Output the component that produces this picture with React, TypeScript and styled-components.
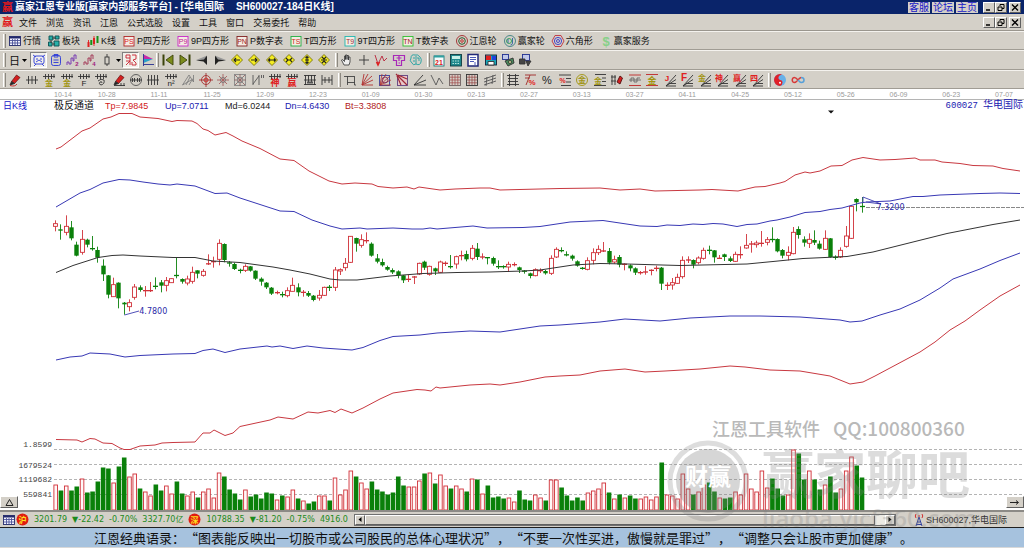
import React from 'react';
import styled, { createGlobalStyle, css } from 'styled-components';

const SANS = `"Liberation Sans", "Noto Sans CJK SC", sans-serif`;
const CJK = `"Noto Sans CJK SC", sans-serif`;
const MONO = `"Liberation Mono", "Noto Sans CJK SC", monospace`;
const FACE = '#d4d0c8';

const Global = createGlobalStyle`
  * { box-sizing: border-box; }
  body { margin: 0; background: #fff; }
  button { font: inherit; padding: 0; margin: 0; border: 0; background: none; color: inherit; }
  svg { display: block; }
`;

/* ---------- frame ---------- */

const Window = styled.main`
  position: relative;
  display: flex;
  flex-direction: column;
  min-height: 100vh;
  overflow: hidden;
  background: ${FACE};
  color: #111;
  font-family: ${SANS};
  font-size: 9px;
  white-space: nowrap;
`;

const TitleBar = styled.header`
  display: flex;
  align-items: center;
  height: 14px;
  padding: 0 3px 0 2px;
  background: #0a246a;
`;

const Title = styled.h1`
  display: flex;
  flex: 1;
  gap: 12px;
  margin: 0 0 0 2px;
  color: #fff;
  font-size: 10px;
  font-weight: 700;
  line-height: 14px;
`;

const HeaderLinks = styled.nav`
  display: flex;
  gap: 2px;
  margin-right: 5px;
`;

const HeaderLink = styled.a`
  width: 22px;
  height: 11px;
  background: ${FACE};
  color: #1414c8;
  font-size: 10px;
  line-height: 11px;
  text-align: center;
  text-decoration: none;
`;

const raised = css`
  background: ${FACE};
  border: 1px solid;
  border-color: #fff #606060 #606060 #fff;
`;

const WindowControls = styled.div`
  display: flex;
  & > :last-child { margin-left: 2px; }
`;

const ControlButton = styled.button`
  ${raised}
  display: grid;
  place-items: center;
  width: 12px;
  height: 11px;
`;

const MenuBar = styled.nav`
  display: flex;
  align-items: center;
  height: 17px;
  padding: 0 3px 0 2px;
  border-bottom: 1px solid #9a968e;
`;

const MenuList = styled.div`
  display: flex;
  flex: 1;
  gap: 9px;
  margin-left: 6px;
`;

const Brand = styled.span<{ $size: number }>`
  width: ${p => p.$size}px;
  color: #e01818;
  font-size: ${p => p.$size}px;
  font-weight: 700;
  line-height: 13px;
`;

const ToolBar = styled.div<{ $tall?: boolean }>`
  display: flex;
  align-items: center;
  height: ${p => (p.$tall ? 20 : 19)}px;
  padding-left: 3px;
  border-top: 1px solid #f4f2ee;
  border-bottom: 1px solid #a09c94;
`;

const Grip = styled.span`
  width: 3px;
  height: 14px;
  border-left: 1px solid #fff;
  border-right: 1px solid #8c8880;
`;

const NavList = styled.div`
  display: flex;
  gap: 6px;
  margin-left: 2px;
`;

const NavButton = styled.button`
  display: flex;
  align-items: center;
  gap: 1px;
  line-height: 14px;
`;

const IconGroup = styled.div<{ $width: number }>`
  display: grid;
  grid-auto-flow: column;
  grid-auto-columns: 1fr;
  width: ${p => p.$width}px;
  margin-right: 2px;
`;

const IconButton = styled.button<{ $pressed?: boolean; $wide?: boolean }>`
  display: flex;
  align-items: center;
  justify-content: center;
  gap: 2px;
  flex: none;
  width: ${p => (p.$wide ? '24px' : '17px')};
  height: 16px;
  font-size: 11px;
  ${p => p.$pressed && css`
    background: #f2f0ea;
    border: 1px solid;
    border-color: #808080 #fff #fff #808080;
  `}
`;

const Row = styled.div`
  display: flex;
`;

/* ---------- chart ---------- */

const DateAxis = styled.div`
  display: grid;
  grid-template-columns: 44fr repeat(17, 53fr) 29fr;
  height: 11px;
  padding-left: 54px;
  background: #fff;
  border-bottom: 1px solid #b4b4b4;
  color: #9a9a9a;
  font-size: 7px;
  line-height: 11px;
  & > span { min-width: 0; }
`;

const Plot = styled.section`
  position: relative;
  flex: 1;
  min-height: 400px;
  background: #fff;
`;

const PlotSvg = styled.svg`
  position: absolute;
  inset: 0;
  width: 100%;
  height: 100%;
`;

const Legend = styled.div`
  position: relative;
  display: grid;
  grid-template-columns: 51px 51px repeat(4, 60px) 1fr;
  padding: 0 1px 0 3px;
  line-height: 12px;
`;

const LegendText = styled.span<{ $tone: string }>`
  color: ${p => p.$tone};
`;

const ChannelName = styled.span`
  font-size: 10px;
`;

const Security = styled.span`
  flex: 1;
  color: #2020b0;
  font-family: ${MONO};
  text-align: right;
  & > b {
    margin-left: 5px;
    font-size: 10px;
    font-weight: 400;
  }
`;

const AxisLabel = styled.span<{ $top: number }>`
  position: absolute;
  top: ${p => p.$top}%;
  left: 0;
  width: 52px;
  color: #444;
  font-family: ${MONO};
  font-size: 8px;
  line-height: 10px;
  text-align: right;
`;

const PriceTag = styled.span<{ $left: number; $top: number }>`
  position: absolute;
  left: ${p => p.$left}%;
  top: ${p => p.$top}%;
  color: #2a2aa8;
  font-family: "DejaVu Sans", sans-serif;
  font-size: 8px;
  line-height: 10px;
`;

const CornerButton = styled.button<{ $side: 'left' | 'right' }>`
  ${raised}
  position: absolute;
  bottom: 2px;
  ${p => p.$side}: 0;
  display: grid;
  place-items: center;
  width: 18px;
  height: 12px;
`;

const Watermark = styled.svg`
  position: absolute;
  right: 24px;
  bottom: 8px;
  pointer-events: none;
  font-family: ${CJK};
`;

/* ---------- bottom ---------- */

const StatusBar = styled.footer`
  display: flex;
  align-items: center;
  height: 18px;
  padding: 0 4px 0 2px;
  border-top: 2px solid #8c8a86;
  border-bottom: 1px solid #202020;
`;

const Ticker = styled.div`
  display: flex;
  align-items: center;
  gap: 5px;
  min-width: 350px;
  color: #1c8a1c;
  font-family: "DejaVu Sans", "Noto Sans CJK SC", sans-serif;
  font-size: 8px;
  line-height: 12px;
`;

const Scroller = styled.div`
  display: flex;
  flex: 1;
  height: 12px;
  margin: 0 18px 0 2px;
  background: #eceae4;
  border: 1px solid #707070;
`;

const ScrollThumb = styled.div`
  ${raised}
  flex: 1;
  margin-right: 10px;
`;

const ScrollButton = styled.button`
  ${raised}
  display: grid;
  place-items: center;
  width: 10px;
`;

const Station = styled.div`
  display: flex;
  align-items: center;
  gap: 2px;
  width: 106px;
  color: #333;
  line-height: 12px;
`;

const Quote = styled.p`
  height: 20px;
  margin: 0;
  padding-left: 94px;
  background: #a6c2de;
  border-bottom: 1px solid #d8d8d8;
  color: #101010;
  font-family: ${CJK};
  font-size: 13px;
  line-height: 20px;
  text-spacing-trim: space-all;
`;

/* ---------- icons ---------- */

type Kid = { children?: React.ReactNode };

const Ico = ({ children }: Kid) => (
  <svg width="14" height="14" viewBox="0 0 14 14" fill="none" stroke="#333" strokeWidth=".9" aria-hidden="true">
    {children}
  </svg>
);

const Glyph = ({ x = 7, y, size, fill = '#222', weight = 700, children }: Kid & { x?: number; y: number; size: number; fill?: string; weight?: number }) => (
  <text x={x} y={y} fontSize={size} fill={fill} stroke="none" textAnchor="middle" fontWeight={weight} fontFamily={SANS}>
    {children}
  </text>
);

const Ladder = ({ children }: Kid) => (
  <Ico>
    <path d="M1 3.5H13M3.5 1V6M6.5 1V6M9.5 1V6M12 1V5" />
    {children}
  </Ico>
);

const Boxed = ({ tone, ink, label }: { tone: string; ink: string; label: string }) => (
  <Ico>
    <rect x="2" y="2.5" width="10" height="9.5" stroke={tone} fill="#f4ece4" />
    <Glyph y={9.7} size={7} weight={400} fill={ink}>{label}</Glyph>
  </Ico>
);

const Rings = ({ a, b, c }: { a: string; b: string; c: string }) => (
  <Ico>
    <circle cx="7" cy="7" r="5.5" stroke={a} />
    <circle cx="7" cy="7" r="3.3" stroke={b} />
    <circle cx="7" cy="7" r="1.3" stroke={c} />
  </Ico>
);

const Diamond = ({ d }: { d: string }) => (
  <Ico>
    <path d="M7 1.5L12.5 7L7 12.5L1.5 7Z" fill="#f4ec20" stroke="#77700c" />
    <path d={d} stroke="#222" strokeWidth="1.1" />
  </Ico>
);

const FanLines = ({ label, tone, size = 8 }: { label: string; tone: string; size?: number }) => (
  <Ico>
    <path d="M3 13L13 2M3 13L13 6.5M3 13H13M6 10.5H13" />
    <Glyph x={4} y={8} size={size} fill={tone}>{label}</Glyph>
  </Ico>
);

const Pen = () => (
  <>
    <path d="M3.5 8.5L8.5 2L12 4.5L6.5 10.5Z" fill="#d42020" stroke="#5a1010" strokeWidth=".7" />
    <path d="M3.5 8.5L2 12L6.5 10.5Z" fill="#222" />
  </>
);

const TableIcon = () => (
  <Ico>
    <rect x="1.5" y="2.5" width="11" height="9" fill="#f4f4ff" stroke="#22286a" />
    <path d="M1.5 3.5H12.5" strokeWidth="2" stroke="#22286a" />
    <path d="M2 6.5H12M2 9H12M4.5 5V11M7 5V11M9.5 5V11" stroke="#4c5298" strokeWidth=".9" />
  </Ico>
);

const GridIcon = ({ tone, accent }: { tone: string; accent: string }) => (
  <Ico>
    <rect x="1.5" y="1.5" width="11" height="11" stroke={tone} />
    <path d="M4.2 2V12M7 2V12M9.8 2V12M2 4.2H12M2 7H12M2 9.8H12" stroke={accent} strokeWidth=".7" />
  </Ico>
);

const Caret = () => (
  <svg width="5" height="3" viewBox="0 0 5 3" aria-hidden="true"><path d="M0 0H5L2.5 3Z" /></svg>
);

const OLIVE = '#a09410';
const RED = '#e02020';

const navItems: [string, React.ReactNode][] = [
  ['行情', <TableIcon />],
  ['板块', <Ico><path d="M2 2H6V6H2ZM8 2H12V5H8ZM1.500 8H5V12H1.500ZM7 7H12V12H7Z" fill="#28b0a8" stroke="#0c4e50" /><path d="M5 4H9M4 6V9M5 10H8" /></Ico>],
  ['K线', <Ico><path d="M2.500 8V13M8 4V10" stroke={RED} strokeWidth="2" /><path d="M5.300 6V11M11.500 2V9" stroke="#189018" strokeWidth="2" /><path d="M2.500 6V13M8 2V12" stroke={RED} /></Ico>],
  ['P四方形', <Boxed tone="#b02828" ink={RED} label="PS" />],
  ['9P四方形', <Boxed tone="#c828c8" ink="#c01890" label="P9" />],
  ['P数字表', <Boxed tone="#802020" ink="#a01818" label="PN" />],
  ['T四方形', <Boxed tone="#20b040" ink="#c83020" label="TS" />],
  ['9T四方形', <Boxed tone="#20b8b0" ink="#a03038" label="T9" />],
  ['T数字表', <Boxed tone="#30c030" ink="#a02020" label="TN" />],
  ['江恩轮', <Rings a="#a02828" b="#184818" c="#c02020" />],
  ['赢家轮', <Ico><circle cx="7" cy="7" r="5.500" stroke="#3c8080" /><circle cx="6" cy="7" r="2.500" stroke="#28a050" /><path d="M9.500 4V9Q9.500 11 7.500 11M5 5V9" stroke="#3060a0" /></Ico>],
  ['六角形', <Ico><path d="M4 1.500H10L13 7L10 12.500H4L1 7Z" stroke="#c03040" /><circle cx="7" cy="7" r="3.600" stroke="#3838c8" /><circle cx="7" cy="7" r="1.500" stroke="#3838c8" /></Ico>],
  ['赢家服务', <Ico><Glyph y={12} size={13} fill="#88d088">$</Glyph></Ico>],
];

const faceIcon = <Ico><rect x="2" y="3" width="10" height="8" rx="2" stroke="#2838d8" /><path d="M1 2L4 4M13 2L10 4M4 6H6M8 6H10M4 9L7 7L10 9M2 13L4 11M12 13L10 11" stroke="#2838d8" /></Ico>;
const clipIcon = <Ico><rect x="2.500" y="2.500" width="9" height="10" rx="2" stroke="#2838d8" /><path d="M5 1.500H9V4H5ZM4.500 7H9.500M4.500 9.500H9.500" stroke="#2838d8" /></Ico>;
const waveIcon = (tone: string, n: string) => <Ico><path d="M1 12V9H3V11H5V5H7V8H8V2H10V6" stroke={tone} /><Glyph x={11} y={13} size={6} fill="#a02080">{n}</Glyph></Ico>;
const candleIcon = <Ico><rect x="5" y="4" width="4" height="7" /><path d="M7 1V4M7 11V13" /></Ico>;
const redFaceIcon = <Ico><path d="M2 2H6V5H2ZM8 2H12V6L9 7L12 10V12H8V9M2 8H6L4 10L2 12M6 5V12" stroke="#c82030" /></Ico>;
const flagIcon = <Ico><path d="M2.500 1.500L12 6H2.500Z" fill="#c828a8" stroke="none" /><path d="M2.500 6H12L2.500 10Z" fill="#28a0c8" stroke="none" /><path d="M2.500 1V13M2.500 11.500H13" stroke="#283090" /></Ico>;

const navigationIcons = [
  <Ico><path d="M12 2V12L5 7Z" fill="#7c8c1c" stroke="#3c440c" /><path d="M2.500 1.500V12.500" strokeWidth="2" stroke="#3c440c" /></Ico>,
  <Ico><path d="M2 2V12L9 7Z" fill="#7c8c1c" stroke="#3c440c" /><path d="M11.500 1.500V12.500" strokeWidth="2" stroke="#3c440c" /></Ico>,
  <Ico><path d="M1 7L11 3V8Z" fill="#999" stroke="none" /><path d="M12 2.500V12L8.500 8.500L1 7.500L9 6.500Z" fill="#222" stroke="none" /></Ico>,
  <Ico><path d="M13 7L3 3V8Z" fill="#999" stroke="none" /><path d="M2 2.500V12L5.500 8.500L13 7.500L5 6.500Z" fill="#222" stroke="none" /></Ico>,
  <Diamond d="M4 7H10M6 5L4 7L6 9" />,
  <Diamond d="M4 7H10M8 5L10 7L8 9" />,
  <Diamond d="M3.500 7H10.500M5 5.500L3.500 7L5 8.500M9 5.500L10.500 7L9 8.500" />,
  <Diamond d="M4 5L6 7L4 9M10 5L8 7L10 9M6 7H8" />,
  <Diamond d="M7 3.500V10.500M5.500 5L7 3.500L8.500 5M5.500 9L7 10.500L8.500 9M5 7H9" />,
  <Diamond d="M5 4L7 6L9 4M5 10L7 8L9 10M4 7H10" />,
];

const pointerIcons = [
  <Ico><path d="M4 12L1.500 7L2.500 6.500L4.500 8.500V3H5.500V6.500V2H7V6.500V2.500H8.500V7V4H10V9L9 12Z" fill="#eee" strokeWidth=".8" /></Ico>,
  <Ico><path d="M7 2V12M2 7H12" /></Ico>,
  <Ico><path d="M1 2L4 11L8 3L10 8L13 5" stroke="#b82038" /><path d="M2.500 9L4 12L5.500 9" stroke={RED} strokeWidth="1.500" /></Ico>,
  <Ico><path d="M1.500 2.500H12.500V7.500H9.500V12.500H4.500V7.500H1.500ZM4.500 5H9.500M7 3V8M6.500 10H8" stroke="#a828b8" strokeWidth="1.200" /></Ico>,
  <Ico><path d="M6 2Q2 1 2 5Q0 8 3 10Q4 13 7 11Q11 13 12 9Q13 6 11 4Q9 1 6 2ZM7 3V11M4 5H6M4 8H6M8 5H10V8" stroke="#20a0a0" /></Ico>,
];

const utilityIcons = [
  <Ico><rect x="2" y="3" width="10" height="10" fill="#f4fcfc" stroke="#207878" /><path d="M2 3.500H12" stroke="#30a0a0" strokeWidth="2" /><Glyph y={11.500} size={7} fill={RED}>21</Glyph></Ico>,
  <Ico><rect x="1.500" y="1.500" width="11" height="11.500" fill="#20888c" stroke="#103c40" /><rect x="3" y="3" width="8" height="3" fill="#c8f0e8" stroke="none" /><path d="M3.500 8H10.500M3.500 10.500H10.500" stroke="#c8f0e8" strokeDasharray="1.500 1" /></Ico>,
  <Ico><rect x="2" y="1.500" width="10" height="11.500" fill="#fff" stroke="#202878" strokeWidth="1.500" /><path d="M4 4.500H10M4 6.500H10M4 8.500H8M9 9V12" stroke="#3848b0" /></Ico>,
  <Ico><rect x="1.500" y="2" width="11" height="10" fill="#18a8b8" stroke="#102038" /><path d="M2 2.500H7V7H2Z" fill="#e02020" stroke="none" /><path d="M8 3H12V7H8Z" fill="#2040e0" stroke="none" /><path d="M4 8.500H10V12H4Z" fill="#fff" /></Ico>,
  <Ico><rect x="1.500" y="1.500" width="6" height="5" fill="#c0c8e8" stroke="#203090" /><path d="M4 8L12 5L13 10L7 13Z" fill="#48885c" /><circle cx="9" cy="9" r="1.500" fill="#d8e8a0" /></Ico>,
  <Ico><rect x="4.500" y="1.500" width="7" height="6" fill="#c0c8e8" stroke="#203090" /><path d="M1.500 6H7V11H1.500ZM8 8H13L10 13Z" fill="#444" /></Ico>,
];

const drawIcons = [
  <Ico><Pen /><path d="M2 12.500Q7 14 9 11" stroke="#c02020" /></Ico>,
  <Ico><path d="M1 7H13M3.500 3V11M7 3V11M10.500 3V11" /></Ico>,
  <Ladder><Glyph y={13} size={8} fill={OLIVE}>金</Glyph></Ladder>,
  <Ladder><Glyph y={13} size={8} fill={OLIVE}>金</Glyph></Ladder>,
  <Ladder><Glyph y={13} size={8} weight={400}>F</Glyph></Ladder>,
  <Ladder><path d="M4 8Q7 5 10 7Q11 11 7 12Q4 11 6 9Q8 8 8 10" /></Ladder>,
  <Ico><Pen /><path d="M2 12.500H13M9 10V13M12 10V13" /></Ico>,
  <Ico><circle cx="7" cy="7" r="5.500" stroke="#555" /><path d="M1 7H13M3.500 5V9M5.500 5V9M8.500 5V9M10.500 5V9" /></Ico>,
  <Ico><path d="M1 7H13M2.500 2V12M5.500 2V12M8.500 2V12M11.500 2V12" /></Ico>,
  <Ladder><Glyph y={13} size={8} weight={400}>n²</Glyph></Ladder>,
  <Ico><path d="M1.500 12L8 2L12.500 9V2M1.500 12L12 6M5 12L9 4M8 12L11 7" stroke="#777" strokeWidth=".8" /></Ico>,
  <Ico><circle cx="7" cy="7" r="4.500" stroke="#a83030" /><circle cx="7" cy="7" r="2" stroke={RED} /><path d="M7 0V14M0 7H14" stroke="#a03030" /></Ico>,
  <Ico><path d="M7 1V13M1 7H13M3 3L11 11M11 3L3 11" stroke="#a86060" /><circle cx="7" cy="7" r="2.500" stroke="#777" /></Ico>,
  <Ico><rect x="1.500" y="1.500" width="11" height="11" stroke="#888" /><path d="M7 1V13M1 7H13M2 2L12 12M12 2L2 12" stroke="#906868" /><rect x="4.500" y="4.500" width="5" height="5" stroke="#888" /></Ico>,
  <Ico><path d="M2 2V12M2 11L8 3M8 2V12M10.500 2V5M12.500 2V5" stroke="#555" /></Ico>,
  <Ladder><Glyph y={13} size={9} fill={RED}>神</Glyph></Ladder>,
  <Ladder><Glyph y={13} size={9} fill={RED}>赢</Glyph></Ladder>,
  <Ico><path d="M1 2.500H13M1 7H13M1 11.500H13M2.500 2V12M5.500 2V9M8.500 2V9M11.500 2V12" /><path d="M4 9.500H10" strokeWidth="2" stroke="#555" /></Ico>,
  <Ico><path d="M2 2V12M5 4V10M9 4V10M12 2V12M2 7H12" /></Ico>,
];

const fan = 'M2 12L4 1M2 12L8 1M2 12L12 3M2 12L13 7M2 12H13';
const shapeIcons = [
  <Ico><rect x="4.500" y="3.500" width="7" height="6" stroke="#444" /><path d="M1 3.500H4M4.500 9V12M11.500 9V12H13" stroke="#444" /></Ico>,
  <Ico><path d={fan} stroke="#b03030" /></Ico>,
  <Ico><rect x="1.500" y="2.500" width="10" height="10" stroke="#3840a0" /><path d={fan} stroke="#b03030" strokeWidth=".8" /><circle cx="7" cy="7" r="3" stroke="#803060" /></Ico>,
  <Ico><rect x="2.500" y="2.500" width="10" height="10" fill="#e8c8c8" stroke="#604080" /><path d="M1 1L9 9M3 2L12 6M2 3L6 12M2 2L12 12" stroke="#a02838" strokeWidth="1.200" /></Ico>,
  <Ico><path d="M1 12L10 2M1 12L13 7M1 12H13" /></Ico>,
  <Ico><path d="M1 2L6 12L9 5L13 11" stroke="#555" /></Ico>,
  <GridIcon tone="#706060" accent="#a04848" />,
  <GridIcon tone="#333" accent="#904040" />,
  <Ico><path d="M1 6L13 2M1 9L13 5M1 12L13 8M3 13L4 4M9 11L10 2" stroke="#555" strokeWidth=".9" /></Ico>,
];

const measureIcons = [
  <Ico><path d="M3.500 1V13M9.500 1V13M1 2.500H13M2 5.500H12M2 8.500H12M1 11.500H13" /></Ico>,
  <Ico><path d="M2 2H13M2 5H7M3 12L7 2" stroke="#a02828" /><Glyph x={9} y={12} size={8} fill={RED}>%</Glyph></Ico>,
  <Ico><Glyph y={11} size={11} weight={400}>%</Glyph></Ico>,
  <Ico><path d="M1 2H13M8 5.500H13M8 9H13M3 12.500H13" /><Glyph x={4.500} y={9.500} size={7} fill={RED}>%</Glyph></Ico>,
  <Ico><circle cx="7" cy="7" r="5.500" stroke={OLIVE} /><Glyph y={10} size={8} fill={OLIVE}>金</Glyph></Ico>,
  <Ico><path d="M2 1.500H13M9 5H13M9 8.500H13M1 12.500H13" /><Glyph x={5} y={10.500} size={8} fill={OLIVE}>金</Glyph></Ico>,
  <Ico><path d="M2 2V12M5 2V12M1 4H6M1 8H6" /><path d="M7 9L10 3L12.500 5L10 11Z" fill="#d42020" stroke="#501010" /></Ico>,
  <Ico><path d="M1 2H13M1 12.500H13" stroke="#c02828" /><path d="M1 7H13M3 9V5H6V9H9V5H12" stroke="#666" /></Ico>,
  <Ico><path d="M1 1.500H13M1 12.500H13" stroke="#c02828" /><Glyph y={11} size={9} fill={OLIVE}>金</Glyph></Ico>,
  <FanLines label="J" tone={RED} />,
  <FanLines label="F" tone={RED} size={10} />,
  <FanLines label="金" tone={OLIVE} />,
  <FanLines label="神" tone={RED} />,
  <FanLines label="赢" tone={RED} />,
  <FanLines label="四" tone={RED} />,
];

const extraIcons = [
  <Ico><circle cx="7" cy="7" r="6" fill="#68b0e8" stroke="none" /><path d="M7 1A6 6 0 0 0 7 13Q9.500 12 9.500 9.500T7 7Q5 6 5.500 4T9 1.500Z" fill="#e02028" stroke="none" /><circle cx="7" cy="9.800" r="1" fill="#fff" stroke="none" /></Ico>,
  <Ico><path d="M7 7Q4 3.500 2 5Q.500 7 2 9Q4 10.500 7 7Q8.500 5 10 4.500" stroke="#d83838" strokeWidth="1.500" /><path d="M10 4.500Q13 4.500 13 7Q13 9.500 10.500 9.500Q9 9.500 7 7" stroke="#58a0d8" strokeWidth="1.500" /></Ico>,
];

/* ---------- data ---------- */

const dates = ['10-14', '10-28', '11-11', '11-25', '12-09', '12-23', '01-09', '01-30', '02-13', '02-27', '03-13', '03-27', '04-11', '04-25', '05-12', '05-26', '06-09', '06-23', '07-07'];

// One entry per session: r = close up, g = close down, followed by the volume.
const sessions = `r25 g19 r24 g19 g23 r31 g17 g18 g28 g42 g41 r27 g43 g52 r33 r36 g21 r18 r14 g25 g19 r24 r16 g28 g16 r14 r18 g12 r18 r21
r12 r37 g33 g20 g16 g10 r20 g13 g15 g11 g17 g16 r10 g14 r13 r20 g11 r9 g6 g8 r14 r14 g9 r32 r15 r20 r39 g33 r27 r21
g28 g20 g18 g15 g17 g33 g24 r23 r23 r29 g36 r37 g26 r35 r24 g21 r24 r21 g18 r31 g30 r16 g24 g12 g13 g11 r12 r8 g19 g10
g9 r15 r12 g9 r30 r30 g22 g14 g9 g12 g9 r17 r19 r21 r27 g17 r11 g15 r12 g14 g11 r11 r13 r10 r13 g47 r15 r14 r11 r36
r21 g15 r18 r25 g27 g18 r12 g11 g12 r18 r15 r36 r21 r18 r39 r22 g31 g21 g14 r15 r60 g56 g30 r39 g30 g20 r25 g33 g17 r21
r39 r53 g44 g32`.split(/\s+/);

// High, body top, body bottom, low; three steps to a chart unit, counted down from level 200.
const prices = `61,71,79,94 73,88,92,119 46,79,97,106 63,82,115,121 125,134,167,169 90,118,157,164 116,119,134,142 108,145,147,152 140,150,173,188 178,197,223,243
225,226,284,295 233,254,290,290 247,248,295,325 306,308,313,344 298,308,320,334 252,261,292,299 256,262,270,275 258,271,273,290 246,271,273,276 232,258,260,268
240,247,257,277 231,242,256,274 235,236,248,248 171,225,228,235 235,237,245,251 227,237,249,256 200,217,244,251 211,211,221,235 207,214,226,230 163,190,193,195
170,184,186,203 118,130,178,196 130,132,180,187 183,188,190,200 188,192,207,210 206,210,212,220 193,199,211,216 198,199,212,215 211,212,236,240 232,236,245,257
246,248,262,267 261,263,281,285 272,277,279,283 275,283,285,292 262,272,287,292 233,256,274,274 250,262,277,289 270,276,278,290 273,279,287,291 285,287,300,304
270,286,294,302 260,262,286,288 255,261,263,273 201,210,262,273 205,209,213,225 174,190,203,212 108,109,187,189 113,114,131,155 103,119,136,143 97,121,123,130
127,131,167,170 162,175,185,190 176,186,196,200 197,201,209,212 205,210,217,222 211,214,226,235 225,226,241,249 225,237,239,246 228,230,232,252 188,190,222,225
182,185,203,210 197,199,223,227 203,205,214,225 182,186,217,219 184,189,191,198 165,199,201,206 167,170,192,206 152,166,168,181 152,162,178,184 135,145,175,181
129,146,171,180 160,170,172,178 172,172,174,193 170,174,191,197 181,199,201,207 196,199,201,206 185,193,201,216 187,193,195,199 200,202,210,219 210,212,215,221
218,220,228,235 205,209,227,229 205,211,213,219 210,213,220,224 166,175,220,225 142,148,171,174 142,151,153,157 154,163,166,169 164,167,176,182 181,184,197,200
201,204,206,209 172,182,208,211 145,158,181,193 136,148,158,165 126,152,154,156 144,153,188,193 167,179,186,191 165,171,194,202 190,192,194,211 193,196,205,214
202,205,218,225 213,217,219,224 198,215,217,224 208,210,212,226 197,204,206,214 201,203,251,270 247,255,257,270 234,248,255,269 221,232,250,252 169,181,230,236
169,179,181,189 178,180,194,205 169,174,188,193 143,151,175,179 137,150,152,163 150,151,172,188 165,174,176,177 161,163,171,183 169,175,183,186 155,163,184,186
139,163,165,176 102,136,144,146 123,131,133,158 122,129,134,143 93,129,131,140 111,119,127,136 82,117,120,127 115,117,154,157 147,150,167,175 139,157,166,181
81,97,161,163 79,87,105,116 109,118,128,140 100,118,130,144 91,120,128,135 122,131,146,149 91,115,148,150 114,115,171,173 166,171,173,179 142,151,171,174
78,108,139,143 16,19,115,117 -5,-3,7,34 -9,18,21,38`.split(/\s+/).map(s => s.split(',').map(v => 200 + Number(v) / 3));

const UP = '#d03038';
const DOWN = '#0a800a';

const channel: [string, string][] = [
  ['#c83840', '56,149 61,147 82,131 90,128 103,119 111,117 119,113.500 132,113.500 140,117 158,118.500 172,121.500 177,120.500 192,121 197,123.500 203,129 208,130.500 215,135 226,132.500 233,136 242,141 260,148.500 280,159 294,160.500 309,171 329,181 342,184 355,183 372,184 378,186.500 393,188 407,187 414,189 419,187 440,190 455,189 480,188 490,188 500,190 560,188.500 600,188 620,190 640,189 655,191 700,190 712,189.500 738,191 755,187 765,186.500 780,183 785,181.500 795,175 805,172 810,173 820,171 831,166 842,165.500 852,160 863,157.500 880,160 895,159.500 915,158 920,160 935,160 942,162 960,163.500 973,165.500 993,166 1003,168.500 1020,171'],
  ['#3838b4', '56,207 80,193 90,189.500 103,183 119,179.500 130,180 143,182 158,184 170,185 177,184 195,186 215,193.500 227,193 240,198 280,211 294,211.500 312,220 330,226 342,229 360,228 367,229 393,228 412,229 423,229 430,228 437,229 473,226 487,228 523,227.500 540,226.500 570,222 603,220.500 613,222 640,226 657,226.500 667,225 680,225.500 693,224 703,224.500 713,223.500 723,224 737,226.500 747,224.500 757,224 770,221 777,220 790,217 805,212.500 820,211.500 830,209.500 842,208 860,203 867,202 890,201 913,196.500 923,196.500 940,195 980,193.500 1000,193 1020,193.500'],
  ['#333', '56,272.500 73,265.500 98,257.500 112,255.500 123,255 140,256 173,257.500 195,257.500 213,261 240,262.500 273,267 290,270 310,274 330,279 340,280 357,280 390,276 423,273.500 457,272.500 490,272 523,271 540,270 573,265 600,263.500 627,264 680,265.500 747,264 773,261.500 803,258.500 847,256.500 873,252 913,242 947,233.500 993,224.500 1020,220'],
  ['#3838b4', '56,360 70,357 82,356 90,353 110,354 125,357 140,355.500 173,354 195,353.500 203,350.500 213,349 225,352.500 240,349 267,346 272,347 280,346 293,348.500 307,346 323,348 352,350 363,347.500 380,340.500 393,336.500 420,335 437,333 470,331 500,332 540,326 560,325 600,322 625,319 660,321 690,318 730,316 760,316 800,317 840,320 850,322 862,321 880,315 900,309 920,300 940,288 953,279 980,269 1000,260.500 1020,253'],
  ['#c83840', '56,439.500 77,440 82,442 90,438.500 95,439 103,443 112,443.500 120,448 124,449.500 130,449.500 140,446 155,445 162,443 173,442.500 195,442 203,433 210,433 214,430 220,433 225,435.500 233,433 240,426.500 270,420 278,417 293,419 308,412 318,413 330,410.500 335,412.500 341,409 352,413 363,408 380,399 393,393 417,389.500 425,390 431,391 436,387 440,388 470,385 490,384 500,385 520,382 545,377 560,376 580,375 600,371 625,369 645,372 665,371 700,369 730,366 745,367 770,370 800,371 830,376 850,384 863,382 875,376 890,368 905,360 920,352 935,342 950,330 965,321 980,310 1000,296 1020,285'],
];

const ChartDrawing = () => (
  <PlotSvg viewBox="0 100 1024 410" preserveAspectRatio="none" role="img" aria-label="华电国际 日K线">
    {[449.5, 464.5, 479.5, 494.5].map(y => (
      <line key={y} x1="54" x2="1024" y1={y} y2={y} stroke="#b4b4b4" strokeDasharray="3 2" />
    ))}
    <line x1="866" x2="1024" y1="207.5" y2="207.5" stroke="#888" strokeDasharray="4 1" />
    {sessions.map((s, i) => {
      const up = s[0] === 'r';
      const h = Number(s.slice(1));
      const c = 55.7 + 5.27 * i;
      const m = Math.round(c - 0.5) + 0.5;
      const [high, top, bottom, low] = prices[i];
      const tone = up ? UP : DOWN;
      return (
        <g key={i} stroke={tone}>
          {up
            ? <rect x={c - 1.8} y={510 - h} width="3.6" height={h} fill="#fff8f8" strokeWidth=".9" />
            : <rect x={c - 2.3} y={509.5 - h} width="4.6" height={h + 0.5} fill={tone} stroke="none" />}
          <line x1={m} x2={m} y1={high} y2={low} strokeWidth=".9" />
          {bottom - top <= 1.1
            ? <line x1={m - 2.5} x2={m + 2.5} y1={(top + bottom) / 2} y2={(top + bottom) / 2} strokeWidth="1.3" />
            : up
              ? <rect x={m - 2} y={top} width="4" height={bottom - top} fill="#fff" strokeWidth=".9" />
              : <rect x={m - 2.2} y={top} width="4.4" height={bottom - top} fill={tone} stroke="none" />}
        </g>
      );
    })}
    {channel.map(([tone, points], i) => (
      <polyline key={i} points={points} fill="none" stroke={tone} />
    ))}
    <path d="M124.500 315L139 311M863 197L881 204M863 197V203M866 202L881 204" fill="none" stroke="#3c3cb0" strokeWidth=".9" />
    <path d="M828 110.500H834L831 113.500Z" fill="#111" />
  </PlotSvg>
);

const WindowButtons = () => (
  <WindowControls>
    <ControlButton aria-label="最小化"><svg width="8" height="7"><path d="M1 6H5" stroke="#000" strokeWidth="1.500" /></svg></ControlButton>
    <ControlButton aria-label="还原"><svg width="8" height="7" fill="none" stroke="#000"><path d="M3 2V.500H7V4.500H5M1 3H5V6.500H1Z" /></svg></ControlButton>
    <ControlButton aria-label="关闭"><svg width="8" height="7"><path d="M1 .500L7 6.500M7 .500L1 6.500" stroke="#000" strokeWidth="1.400" /></svg></ControlButton>
  </WindowControls>
);

const Icons = ({ width, items, name }: { width: number; items: React.ReactNode[]; name: string }) => (
  <IconGroup $width={width} role="group" aria-label={name}>
    {items.map((icon, i) => <IconButton key={i} aria-label={`${name} ${i + 1}`}>{icon}</IconButton>)}
  </IconGroup>
);

const Exchange = ({ label }: { label: string }) => (
  <svg width="13" height="13" viewBox="0 0 13 13" aria-hidden="true">
    <circle cx="6.500" cy="6.500" r="6" fill="#e01c10" />
    <text x="6.500" y="9.500" fontSize="8" fontWeight="700" fill="#ffe020" textAnchor="middle" fontFamily={CJK}>{label}</text>
  </svg>
);

export default function App() {
  return (
    <Window lang="zh-CN">
      <Global />
      <TitleBar>
        <Brand $size={11}>赢</Brand>
        <Title><span>赢家江恩专业版[赢家内部服务平台] - [华电国际</span><span>SH600027-184日K线]</span></Title>
        <HeaderLinks>
          {['客服', '论坛', '主页'].map(t => <HeaderLink key={t} href="#">{t}</HeaderLink>)}
        </HeaderLinks>
        <WindowButtons />
      </TitleBar>

      <MenuBar>
        <Brand $size={11}>赢</Brand>
        <MenuList>
          {['文件', '浏览', '资讯', '江恩', '公式选股', '设置', '工具', '窗口', '交易委托', '帮助'].map(t => (
            <button key={t}>{t}</button>
          ))}
        </MenuList>
        <WindowButtons />
      </MenuBar>

      <ToolBar>
        <Grip />
        <NavList>
          {navItems.map(([label, icon]) => <NavButton key={label}>{icon}{label}</NavButton>)}
        </NavList>
      </ToolBar>

      <ToolBar $tall>
        <Grip />
        <Row>
          <IconButton $wide>日<Caret /></IconButton>
          <IconButton $pressed aria-label="主图">{faceIcon}</IconButton>
          <IconButton aria-label="列表">{clipIcon}</IconButton>
          <IconButton aria-label="波段二">{waveIcon('#7030b0', '2')}</IconButton>
          <IconButton aria-label="波段四">{waveIcon('#a03050', '4')}</IconButton>
          <IconButton $wide aria-label="K线样式">{candleIcon}<Caret /></IconButton>
          <IconButton $pressed aria-label="形态">{redFaceIcon}</IconButton>
          <IconButton aria-label="旗形">{flagIcon}</IconButton>
        </Row>
        <Grip />
        <Icons name="移动" width={174} items={navigationIcons} />
        <Grip />
        <Icons name="指针" width={87} items={pointerIcons} />
        <Grip />
        <Icons name="工具" width={104} items={utilityIcons} />
      </ToolBar>

      <ToolBar>
        <Grip />
        <Icons name="画线" width={330} items={drawIcons} />
        <Grip />
        <Icons name="图形" width={158} items={shapeIcons} />
        <Grip />
        <Icons name="测量" width={262} items={measureIcons} />
        <Grip />
        <Icons name="扩展" width={36} items={extraIcons} />
      </ToolBar>

      <DateAxis>{dates.map(d => <span key={d}>{d}</span>)}</DateAxis>

      <Plot>
        <ChartDrawing />
        <Legend>
          <LegendText $tone="#1414c8">日K线</LegendText>
          <ChannelName>极反通道</ChannelName>
          <LegendText $tone="#d02020">Tp=7.9845</LegendText>
          <LegendText $tone="#2020b0">Up=7.0711</LegendText>
          <LegendText $tone="#222">Md=6.0244</LegendText>
          <LegendText $tone="#2020b0">Dn=4.6430</LegendText>
          <Row>
            <LegendText $tone="#b02020">Bt=3.3808</LegendText>
            <Security>600027<b>华电国际</b></Security>
          </Row>
        </Legend>
        <AxisLabel $top={83}>1.8599</AxisLabel>
        <AxisLabel $top={88}>1679524</AxisLabel>
        <AxisLabel $top={91.5}>1119682</AxisLabel>
        <AxisLabel $top={95}>559841</AxisLabel>
        <PriceTag $left={13.6} $top={50.5}>4.7800</PriceTag>
        <PriceTag $left={85.6} $top={25}>7.3200</PriceTag>
        <CornerButton $side="left" aria-label="展开"><svg width="9" height="7"><path d="M1 6.500L4.500 .500L8 6.500Z" fill="none" stroke="#222" /></svg></CornerButton>
        <CornerButton $side="right" aria-label="右移"><svg width="10" height="7"><path d="M0 3.500H8M6 1.500L8.500 3.500L6 5.500" fill="none" stroke="#222" /></svg></CornerButton>
      </Plot>

      <StatusBar>
        <Ticker>
          <Row>
            <TableIcon />
            <Exchange label="沪" />
          </Row>
          <span>3201.79</span><span>▼-22.42</span><span>-0.70%</span><span>3327.70亿</span>
          <Exchange label="深" />
          <span>10788.35</span><span>▼-81.20</span><span>-0.75%</span><span>4916.0</span>
        </Ticker>
        <Scroller>
          <ScrollButton aria-label="向左"><svg width="4" height="5"><path d="M3.500 0V5L.500 2.500Z" /></svg></ScrollButton>
          <ScrollThumb />
          <ScrollButton aria-label="向右"><svg width="4" height="5"><path d="M.500 0V5L3.500 2.500Z" /></svg></ScrollButton>
        </Scroller>
        <Station>
          <svg width="10" height="14" viewBox="0 0 10 14" fill="none" stroke="#3040a0" aria-hidden="true">
            <path d="M5 4L2 13M5 4L8 13M3.500 9H6.500M3 11.500H7" />
            <path d="M2 1Q.500 3 2 5M8 1Q9.500 3 8 5M5 2V4" stroke="#d03030" />
          </svg>
          SH600027,华电国际
        </Station>
      </StatusBar>

      <Quote>江恩经典语录：“图表能反映出一切股市或公司股民的总体心理状况”，“不要一次性买进，傲慢就是罪过”，“调整只会让股市更加健康”。</Quote>

      <Watermark width="340" height="130" viewBox="0 0 340 130" aria-hidden="true">
        <g fill="#808080">
          <text x="52" y="26" fontSize="18" fontWeight="500" opacity=".55">江恩工具软件</text>
          <text x="173" y="26" fontSize="19" fontWeight="500" opacity=".55">QQ:100800360</text>
          <text x="102" y="84" fontSize="52" fontWeight="700" opacity=".27">赢家聊吧</text>
          <text x="102" y="117" fontSize="24" fontWeight="600" opacity=".25" fontFamily="Open Sans, sans-serif">liaoba.yjcf360.com</text>
        </g>
        <g fill="none" stroke="#808080">
          <circle cx="48" cy="71" r="38" strokeWidth="5" opacity=".27" />
          <circle cx="48" cy="71" r="32" fill="#808080" stroke="none" opacity=".32" />
        </g>
        <text x="48" y="75" fontSize="23" fontWeight="700" fill="#fff" textAnchor="middle">财赢</text>
      </Watermark>
    </Window>
  );
}
